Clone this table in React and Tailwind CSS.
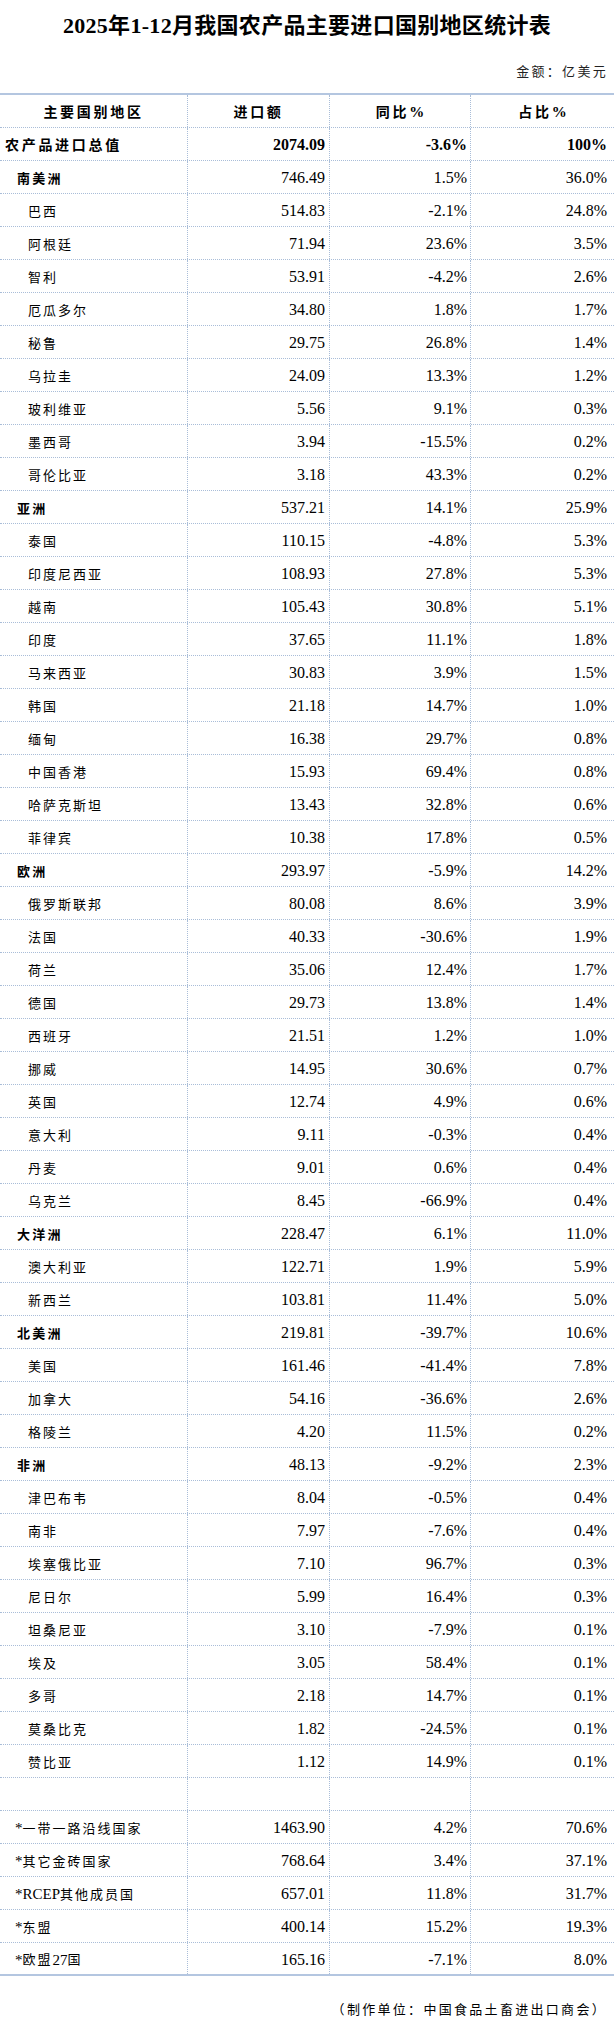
const rows = [
  { type: "region", name: "南美洲", value: "746.49", yoy: "1.5%", share: "36.0%" },
  { type: "country", name: "巴西", value: "514.83", yoy: "-2.1%", share: "24.8%" },
  { type: "country", name: "阿根廷", value: "71.94", yoy: "23.6%", share: "3.5%" },
  { type: "country", name: "智利", value: "53.91", yoy: "-4.2%", share: "2.6%" },
  { type: "country", name: "厄瓜多尔", value: "34.80", yoy: "1.8%", share: "1.7%" },
  { type: "country", name: "秘鲁", value: "29.75", yoy: "26.8%", share: "1.4%" },
  { type: "country", name: "乌拉圭", value: "24.09", yoy: "13.3%", share: "1.2%" },
  { type: "country", name: "玻利维亚", value: "5.56", yoy: "9.1%", share: "0.3%" },
  { type: "country", name: "墨西哥", value: "3.94", yoy: "-15.5%", share: "0.2%" },
  { type: "country", name: "哥伦比亚", value: "3.18", yoy: "43.3%", share: "0.2%" },
  { type: "region", name: "亚洲", value: "537.21", yoy: "14.1%", share: "25.9%" },
  { type: "country", name: "泰国", value: "110.15", yoy: "-4.8%", share: "5.3%" },
  { type: "country", name: "印度尼西亚", value: "108.93", yoy: "27.8%", share: "5.3%" },
  { type: "country", name: "越南", value: "105.43", yoy: "30.8%", share: "5.1%" },
  { type: "country", name: "印度", value: "37.65", yoy: "11.1%", share: "1.8%" },
  { type: "country", name: "马来西亚", value: "30.83", yoy: "3.9%", share: "1.5%" },
  { type: "country", name: "韩国", value: "21.18", yoy: "14.7%", share: "1.0%" },
  { type: "country", name: "缅甸", value: "16.38", yoy: "29.7%", share: "0.8%" },
  { type: "country", name: "中国香港", value: "15.93", yoy: "69.4%", share: "0.8%" },
  { type: "country", name: "哈萨克斯坦", value: "13.43", yoy: "32.8%", share: "0.6%" },
  { type: "country", name: "菲律宾", value: "10.38", yoy: "17.8%", share: "0.5%" },
  { type: "region", name: "欧洲", value: "293.97", yoy: "-5.9%", share: "14.2%" },
  { type: "country", name: "俄罗斯联邦", value: "80.08", yoy: "8.6%", share: "3.9%" },
  { type: "country", name: "法国", value: "40.33", yoy: "-30.6%", share: "1.9%" },
  { type: "country", name: "荷兰", value: "35.06", yoy: "12.4%", share: "1.7%" },
  { type: "country", name: "德国", value: "29.73", yoy: "13.8%", share: "1.4%" },
  { type: "country", name: "西班牙", value: "21.51", yoy: "1.2%", share: "1.0%" },
  { type: "country", name: "挪威", value: "14.95", yoy: "30.6%", share: "0.7%" },
  { type: "country", name: "英国", value: "12.74", yoy: "4.9%", share: "0.6%" },
  { type: "country", name: "意大利", value: "9.11", yoy: "-0.3%", share: "0.4%" },
  { type: "country", name: "丹麦", value: "9.01", yoy: "0.6%", share: "0.4%" },
  { type: "country", name: "乌克兰", value: "8.45", yoy: "-66.9%", share: "0.4%" },
  { type: "region", name: "大洋洲", value: "228.47", yoy: "6.1%", share: "11.0%" },
  { type: "country", name: "澳大利亚", value: "122.71", yoy: "1.9%", share: "5.9%" },
  { type: "country", name: "新西兰", value: "103.81", yoy: "11.4%", share: "5.0%" },
  { type: "region", name: "北美洲", value: "219.81", yoy: "-39.7%", share: "10.6%" },
  { type: "country", name: "美国", value: "161.46", yoy: "-41.4%", share: "7.8%" },
  { type: "country", name: "加拿大", value: "54.16", yoy: "-36.6%", share: "2.6%" },
  { type: "country", name: "格陵兰", value: "4.20", yoy: "11.5%", share: "0.2%" },
  { type: "region", name: "非洲", value: "48.13", yoy: "-9.2%", share: "2.3%" },
  { type: "country", name: "津巴布韦", value: "8.04", yoy: "-0.5%", share: "0.4%" },
  { type: "country", name: "南非", value: "7.97", yoy: "-7.6%", share: "0.4%" },
  { type: "country", name: "埃塞俄比亚", value: "7.10", yoy: "96.7%", share: "0.3%" },
  { type: "country", name: "尼日尔", value: "5.99", yoy: "16.4%", share: "0.3%" },
  { type: "country", name: "坦桑尼亚", value: "3.10", yoy: "-7.9%", share: "0.1%" },
  { type: "country", name: "埃及", value: "3.05", yoy: "58.4%", share: "0.1%" },
  { type: "country", name: "多哥", value: "2.18", yoy: "14.7%", share: "0.1%" },
  { type: "country", name: "莫桑比克", value: "1.82", yoy: "-24.5%", share: "0.1%" },
  { type: "country", name: "赞比亚", value: "1.12", yoy: "14.9%", share: "0.1%" },
  { type: "blank", name: "", value: "", yoy: "", share: "" },
  { type: "group", name: "*一带一路沿线国家", value: "1463.90", yoy: "4.2%", share: "70.6%" },
  { type: "group", name: "*其它金砖国家", value: "768.64", yoy: "3.4%", share: "37.1%" },
  { type: "group", name: "*RCEP其他成员国", value: "657.01", yoy: "11.8%", share: "31.7%" },
  { type: "group", name: "*东盟", value: "400.14", yoy: "15.2%", share: "19.3%" },
  { type: "group", name: "*欧盟27国", value: "165.16", yoy: "-7.1%", share: "8.0%", last: true },
];

const font = "font-['Liberation_Serif','Noto_Sans_CJK_SC',serif]";
const line = "border-[#a9bdd8]";

const nameStyles = {
  total: "pl-[5px] text-[14px] tracking-[2.7px] font-bold",
  region: "pl-[17px] text-[13px] tracking-[2.3px] font-bold",
  country: "pl-[28px] text-[13px] tracking-[2px]",
  group: "pl-[15px] text-[13px] tracking-[2px]",
  blank: "",
};

// latin runs (RCEP, 27, *) sit tight, only the CJK is spaced out
function Label({ text }) {
  const parts = text.split(/([\x00-\x7f]+)/).filter(Boolean);
  return parts.map((p, i) =>
    /^[\x00-\x7f]+$/.test(p) ? (
      <span key={i} className="tracking-normal text-[15px]">
        {p}
      </span>
    ) : (
      <span key={i}>{p}</span>
    )
  );
}

function Row({ row }) {
  const bold = row.type === "total";
  const num = `flex items-center justify-end text-[16px] pt-[2px] ${bold ? "font-bold" : ""}`;
  return (
    <div
      className={`flex h-[33px] ${
        row.last ? "border-b-2 border-solid border-[#b4c6e0]" : `border-b border-dotted ${line}`
      }`}
    >
      <div className={`w-[188px] shrink-0 flex items-center border-r border-dotted ${line} pt-[3px] whitespace-nowrap ${nameStyles[row.type]}`}>
        <Label text={row.name} />
      </div>
      <div className={`w-[142px] shrink-0 pr-[4px] border-r border-dotted ${line} ${num}`}>{row.value}</div>
      <div className={`w-[141px] shrink-0 pr-[3px] border-r border-dotted ${line} ${num}`}>{row.yoy}</div>
      <div className={`flex-1 pr-[7px] ${num}`}>{row.share}</div>
    </div>
  );
}

function HeadCell({ children, className = "" }) {
  return (
    <div className={`flex items-center justify-center text-[14px] tracking-[2.7px] pt-[2px] ${className}`}>
      {children}
    </div>
  );
}

export default function App() {
  return (
    <div className={`w-[614px] bg-white text-black ${font}`}>
      <div className="h-[50px] flex items-center justify-center text-[22px] font-bold tracking-[0.3px]">
        2025年1-12月我国农产品主要进口国别地区统计表
      </div>
      <div className="h-[43px] flex items-end justify-end pb-[11px] pr-[6px] text-[13px] leading-[20px] tracking-[2.3px] text-[#222]">
        金额：亿美元
      </div>

      <div className="border-t-2 border-solid border-[#b4c6e0]">
        <div className={`flex h-[33px] border-b border-dotted ${line} font-bold`}>
          <HeadCell className={`w-[188px] shrink-0 border-r border-dotted ${line}`}>主要国别地区</HeadCell>
          <HeadCell className={`w-[142px] shrink-0 border-r border-dotted ${line}`}>进口额</HeadCell>
          <HeadCell className={`w-[141px] shrink-0 border-r border-dotted ${line}`}>
            同比<span className="tracking-normal text-[15px]">%</span>
          </HeadCell>
          <HeadCell className="flex-1">
            占比<span className="tracking-normal text-[15px]">%</span>
          </HeadCell>
        </div>
        <Row row={{ type: "total", name: "农产品进口总值", value: "2074.09", yoy: "-3.6%", share: "100%" }} />
        {rows.map((r, i) => (
          <Row key={i} row={r} />
        ))}
      </div>

      <div className="pt-[24px] pr-[7px] flex justify-end text-[13px] leading-[20px] tracking-[2.3px]">
        （制作单位：中国食品土畜进出口商会）
      </div>
    </div>
  );
}
